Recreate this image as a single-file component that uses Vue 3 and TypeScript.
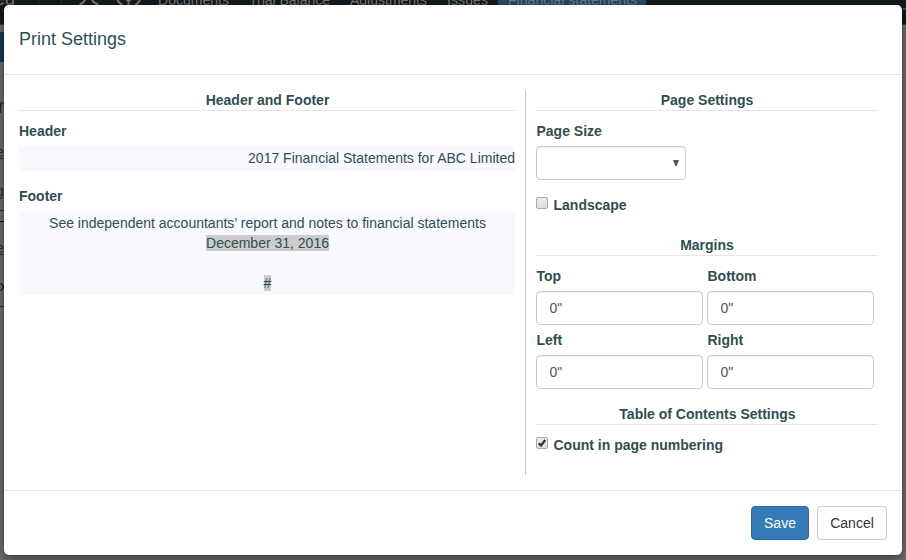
<script setup lang="ts">
import { ref } from 'vue'

interface NavItem { label: string; width: number; active?: boolean }
interface Margin { label: string; value: string }

const nav: NavItem[] = [
  { label: 'Documents', width: 71 },
  { label: 'Trial Balance', width: 81 },
  { label: 'Adjustments', width: 77 },
  { label: 'Issues', width: 41 },
  { label: 'Financial statements', width: 129, active: true },
]
const margins = ref<Margin[]>([
  { label: 'Top', value: '0"' },
  { label: 'Bottom', value: '0"' },
  { label: 'Left', value: '0"' },
  { label: 'Right', value: '0"' },
])
const landscape = ref(false)
const countPages = ref(true)
</script>

<template>
  <div class="page">
    <nav class="navbar">
      <span class="brand">ed</span>
      <i class="sep first"></i>
      <i class="sep"></i>
      <svg class="nav-icons" width="66" height="12" viewBox="0 0 66 12">
        <g fill="none" stroke="#737576" stroke-width="2">
          <path d="M2.500 4.500C5 4 7 2 8.500 -1M21.500 4.500C18.500 4 16 2 14.500 -1" />
          <path d="M40.500 -1C41 2 43 4 45.500 5M63 -1C62.500 2 60.500 4 58 5M51.500 -2V5M49 0H54" />
        </g>
      </svg>
      <div class="tabs">
        <span v-for="n in nav" :key="n.label" class="tab" :class="{ active: n.active }">
          <svg :width="n.width" height="20"><text x="0" y="15" :textLength="n.width">{{ n.label }}</text></svg>
        </span>
      </div>
      <i class="caret"></i>
    </nav>
    <div class="toolbar"></div>
    <div class="side">
      <span class="frag heading">r</span>
      <span class="frag link">e</span>
      <span class="frag mixed">g</span>
      <span class="frag dash"></span>
      <span class="frag link second">e</span>
      <span class="frag close">x</span>
    </div>

    <section class="modal">
      <header class="modal-head"><h4>Print Settings</h4></header>
      <div class="modal-body">
        <div class="left">
          <h5 class="title">Header and Footer</h5>
          <div class="label">Header</div>
          <div class="box header-box">2017 Financial Statements for ABC Limited</div>
          <div class="label footer-label">Footer</div>
          <div class="box footer-box">
            <div class="statement">See independent accountants’ report and notes to financial statements</div>
            <div><mark class="date">December 31, 2016</mark></div>
            <div class="blank"></div>
            <div><mark>#</mark></div>
          </div>
        </div>
        <div class="right">
          <h5 class="title">Page Settings</h5>
          <div class="label indent">Page Size</div>
          <div class="select">
            <svg width="6" height="6" viewBox="0 0 6 6"><path d="M0 0H6L3.600 6H2.400Z" fill="#555" /></svg>
          </div>
          <label class="check landscape">
            <input v-model="landscape" type="checkbox" />
            <span>Landscape</span>
          </label>
          <h5 class="title">Margins</h5>
          <div class="margins">
            <label v-for="m in margins" :key="m.label" class="field">
              <span>{{ m.label }}</span>
              <input v-model="m.value" type="text" />
            </label>
          </div>
          <h5 class="title toc">Table of Contents Settings</h5>
          <label class="check count">
            <input v-model="countPages" type="checkbox" />
            <svg v-if="countPages" class="tick" width="12" height="12" viewBox="0 0 12 12">
              <path d="M2.800 6.200L5 8.500L9.200 3" fill="none" stroke="#333" stroke-width="2.200" />
            </svg>
            <span>Count in page numbering</span>
          </label>
        </div>
      </div>
      <footer class="modal-foot">
        <button class="btn save">Save</button>
        <button class="btn cancel">Cancel</button>
      </footer>
    </section>
  </div>
</template>

<style>
body { margin: 0; overflow: hidden; }
</style>

<style scoped>
* { box-sizing: border-box; }
.page {
  position: relative;
  width: 906px;
  height: 560px;
  overflow: hidden;
  background: #6e6e6e;
  color: #2f4f4f;
  font: 14px/20px "Liberation Sans", Arial, sans-serif;
}
.navbar {
  display: flex;
  height: 25px;
  background: #14191c;
  border-bottom: 1px solid #1f405d;
  color: #77797a;
}
.brand { width: 15px; margin-top: -11px; font-size: 18px; display: flex; justify-content: flex-end; }
.sep { width: 1px; background: #292d30; margin-left: 22px; }
.sep.first { margin-left: 23px; }
.nav-icons { margin-left: 15px; }
.tabs { display: flex; margin-left: 5px; }
.tab { height: 24px; padding: 0 10px; }
.tab svg { display: block; margin-top: -10.5px; fill: #77797a; }
.tab.active { padding-right: 9px; background: #214a6b; }
.caret { width: 3px; height: 2px; margin: 8px 0 0 auto; background: #3b4852; }
.toolbar { width: 4px; height: 30px; margin-top: 7px; background: #16395a; }
.frag { position: absolute; left: -4px; font-size: 14px; }
.heading { top: 96px; left: -2px; font-size: 20px; color: #173653; }
.link { top: 142px; color: #173653; text-decoration: underline; }
.mixed { top: 181px; color: #3d2c22; }
.dash { top: 210px; left: 0; width: 4px; height: 12px; border-top: 1px solid #173653; border-bottom: 1px solid #111; }
.link.second { top: 238px; }
.close { top: 276px; left: 0; height: 31px; color: #111; border-bottom: 1px solid #173653; }
.modal {
  position: absolute;
  top: 5px;
  left: 4px;
  width: 898px;
  height: 550px;
  background: #fff;
  border-radius: 5px;
  box-shadow: 0 4px 12px rgba(0, 0, 0, .45), 0 0 1px rgba(0, 0, 0, .6);
}
.modal-head { height: 70px; padding: 24px 15px; border-bottom: 1px solid #e5e5e5; }
h4 { margin: 0; font-size: 18px; line-height: 20px; font-weight: 400; }
.modal-body { display: flex; height: 415px; padding: 15px; }
.left { width: 507px; height: 385px; padding-right: 10px; border-right: 1px solid #c8c8c8; }
.right { width: 351px; padding-left: 10px; }
.title {
  height: 21px;
  margin: 0 0 10px;
  padding-left: 1px;
  border-bottom: 1px solid #e5e5e5;
  font-size: 14px;
  line-height: 20px;
  text-align: center;
}
.title.toc { padding-left: 2px; }
.label { height: 20px; margin-bottom: 5px; font-weight: 700; }
.indent { padding-left: .5px; }
.box { background: #f8f8ff; }
.header-box { height: 25px; padding-top: 2px; text-align: right; }
.footer-label { margin-top: 15px; }
.footer-box { height: 84px; padding: 2px 0 0 1px; text-align: center; }
.blank { height: 20px; }
mark { background: #ccc; color: inherit; }
.select {
  display: flex;
  align-items: center;
  justify-content: flex-end;
  width: 150px;
  height: 34px;
  padding-right: 6px;
  border: 1px solid #ccc;
  border-radius: 4px;
  box-shadow: inset 0 1px 1px rgba(0, 0, 0, .075);
}
.check { position: relative; display: flex; height: 20px; font-weight: 700; }
.check input {
  appearance: none;
  width: 12px;
  height: 12px;
  margin: 2px 5.500px 0 0;
  border: 1px solid #a8a8a8;
  border-radius: 2px;
  background: linear-gradient(#eee, #dcdcdc);
}
.tick { position: absolute; left: 0; top: 2px; }
.landscape { margin: 15px 0 20px; }
.margins { display: grid; grid-template-columns: 167px 167px; gap: 5px 4px; margin-bottom: 15px; }
.field { display: block; font-weight: 700; }
.field span { display: block; height: 20px; margin-bottom: 5px; padding-left: .5px; }
.field input {
  display: block;
  width: 167px;
  height: 34px;
  padding: 6px 12.500px;
  border: 1px solid #ccc;
  border-radius: 4px;
  background: #fff;
  box-shadow: inset 0 1px 1px rgba(0, 0, 0, .075);
  color: #555;
  font: inherit;
  font-weight: 400;
}
.modal-foot {
  display: flex;
  justify-content: flex-end;
  gap: 8px;
  height: 65px;
  padding: 15px;
  border-top: 1px solid #e5e5e5;
}
.btn {
  height: 34px;
  padding: 0;
  border: 1px solid #ccc;
  border-radius: 4px;
  background: #fff;
  color: #333;
  font: inherit;
}
.save { width: 58px; border-color: #2e6da4; background: #337ab7; color: #fff; }
.cancel { width: 70px; }
</style>
